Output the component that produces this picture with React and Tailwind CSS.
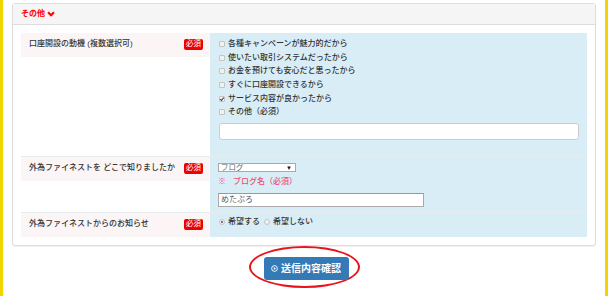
import React from 'react';

const font = { fontFamily: '"Liberation Sans", "Noto Sans CJK JP", sans-serif' };

const Badge = () => (
  <span className="inline-flex items-center justify-center w-[19px] h-[11px] rounded-[2px] bg-[#ee0000] text-white text-[7.5px] leading-none">
    必須
  </span>
);

const Label = ({ children }) => (
  <div className="w-[189px] shrink-0">
    <div className="h-[24px] bg-[#fcf5f5] flex items-center justify-between pl-[8px] pr-[7px] pb-[2px]">
      <span className="text-[#333] font-medium">{children}</span>
      <Badge />
    </div>
  </div>
);

const Checkbox = ({ checked }) => (
  <span className="relative w-[6px] h-[6px] border border-[#c4c4c4] bg-[#f1f1f1] rounded-[1px] mr-[3px] shrink-0">
    {checked && (
      <svg viewBox="0 0 6 6" className="absolute -left-px -top-px w-[6px] h-[6px]">
        <path d="M1.2 3.1 L2.5 4.4 L4.8 1.5" fill="none" stroke="#444" strokeWidth="1.1" />
      </svg>
    )}
  </span>
);

const Radio = ({ checked }) => (
  <span className="w-[6px] h-[6px] rounded-full border border-[#c4c4c4] bg-[#f1f1f1] mr-[3px] flex items-center justify-center shrink-0">
    {checked && <span className="w-[2px] h-[2px] rounded-full bg-[#555]" />}
  </span>
);

const reasons = [
  ['各種キャンペーンが魅力的だから', false],
  ['使いたい取引システムだったから', false],
  ['お金を預けても安心だと思ったから', false],
  ['すぐに口座開設できるから', false],
  ['サービス内容が良かったから', true],
  ['その他（必須）', false],
];

export default function App() {
  return (
    <div style={font} className="w-[608px] h-[296px] border-x-[3px] border-[#f2d500] bg-white pl-[9px] pr-[9px] pt-[3px] text-[8px] text-[#333]">
      <div className="border border-[#ddd] rounded-[3px] shadow-[0_1px_1px_rgba(0,0,0,0.06)]">
        <div className="h-[21px] bg-[#f5f5f5] border-b border-[#ddd] flex items-center pl-[8px] text-[#ff0000] font-bold">
          <span>その他</span>
          <svg viewBox="0 0 10 10" className="w-[8px] h-[8px] ml-[2px]">
            <path d="M1.3 2.8 L5 6.6 L8.7 2.8" fill="none" stroke="#ff0000" strokeWidth="2.6" />
          </svg>
        </div>

        <div className="px-[8px] pt-[8px] pb-[8px]">
          <div className="flex">
            <Label>口座開設の動機 (複数選択可)</Label>
            <div className="flex-1 bg-[#d9edf7] pl-[9px] pr-[8px] pt-[4px] pb-[16px] font-medium">
              {reasons.map(([text, checked]) => (
                <div key={text} className="flex items-center h-[13.7px] leading-[13.7px]">
                  <Checkbox checked={checked} />
                  <span>{text}</span>
                </div>
              ))}
              <div className="mt-[4px] h-[17px] bg-white border border-[#ccc] rounded-[3px]" />
            </div>
          </div>

          <div className="flex border-t border-[#e6ecef]">
            <Label>外為ファイネストを どこで知りましたか</Label>
            <div className="flex-1 bg-[#d9edf7] pl-[8px] pt-[6px] pb-[5px]">
              <div className="w-[78px] h-[9px] bg-white border border-[#a9a9a9] flex items-center justify-between pl-[2px] pr-[3px] text-[#666] text-[7.5px] leading-none overflow-hidden">
                <span>ブログ</span>
                <span className="text-[#111] text-[6px]">▼</span>
              </div>
              <div className="mt-[3px] h-[14px] leading-[14px] text-[#ee4d6e] font-medium">
                <span className="mr-[7px]">※</span>ブログ名（必須）
              </div>
              <div className="mt-[4px] w-[206px] h-[14px] bg-white border border-[#aaa] border-t-[#999] flex items-center pl-[2px] text-[#555]">
                めたぶろ
              </div>
            </div>
          </div>

          <div className="flex border-t border-[#e6ecef]">
            <Label>外為ファイネストからのお知らせ</Label>
            <div className="flex-1 bg-[#d9edf7] pl-[9px] pt-[2px] pb-[8px] font-medium">
              <div className="flex items-center h-[14px]">
                <Radio checked />
                <span className="mr-[4px]">希望する</span>
                <Radio />
                <span>希望しない</span>
              </div>
            </div>
          </div>
        </div>
      </div>

      <div className="flex justify-center">
        <div className="border-2 border-[#e8141c] rounded-[50%] pl-[13px] pr-[9px] pt-[9px] pb-[6px]">
          <button className="w-[85px] h-[23px] bg-[#337ab7] rounded-[3px] flex items-center justify-center text-white font-bold text-[10px]">
            <svg viewBox="0 0 10 10" className="w-[7px] h-[7px] mr-[3px]">
              <circle cx="5" cy="5" r="4.1" fill="none" stroke="#fff" strokeWidth="1.4" />
              <path d="M4 3 L7 5 L4 7 Z" fill="#fff" />
            </svg>
            送信内容確認
          </button>
        </div>
      </div>
    </div>
  );
}
